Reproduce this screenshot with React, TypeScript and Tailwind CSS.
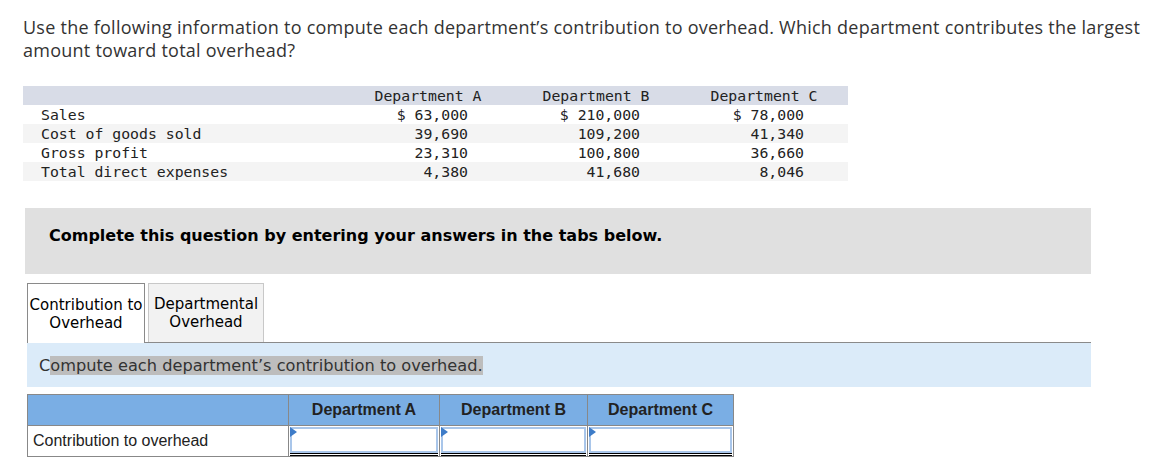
import React from "react";

const rows = [
  { label: "Sales", a: "$ 63,000", b: "$ 210,000", c: "$ 78,000" },
  { label: "Cost of goods sold", a: "39,690", b: "109,200", c: "41,340" },
  { label: "Gross profit", a: "23,310", b: "100,800", c: "36,660" },
  { label: "Total direct expenses", a: "4,380", b: "41,680", c: "8,046" },
];

function InputCell() {
  return (
    <div className="h-[30px] border-l border-[#888] bg-white pt-px px-px">
      <div className="relative h-[26px] border-2 border-[#a9c6ea] bg-white">
        <div className="absolute -left-[2px] -top-[2px] w-0 h-0 border-y-[5px] border-y-transparent border-l-[7px] border-l-[#3e7cc8]" />
      </div>
      <div className="h-[3px] border-y border-black" />
    </div>
  );
}

export default function App() {
  return (
    <div className="w-[1165px] h-[463px] bg-white text-[#333] overflow-hidden">
      <p className="pl-[23px] pr-[10px] pt-[16px] text-[18px] leading-[23px] tracking-[0.25px] font-['Open_Sans',sans-serif] text-[#333]">
        Use the following information to compute each department’s contribution to overhead. Which department contributes the largest amount toward total overhead?
      </p>

      <div className="ml-[23px] mt-[24px] w-[825px] font-['DejaVu_Sans_Mono',monospace] text-[14.8px] leading-[19px] text-[#222]">
        <div className="grid grid-cols-[321px_168px_168px_168px] h-[19px] bg-[#d8dce7]">
          <div />
          <div className="text-center">Department A</div>
          <div className="text-center">Department B</div>
          <div className="text-center">Department C</div>
        </div>
        {rows.map((r, i) => (
          <div
            key={r.label}
            className={`grid grid-cols-[321px_168px_168px_168px] h-[19px] ${i % 2 === 1 ? "bg-[#f4f4f4]" : "bg-white"}`}
          >
            <div className="pl-[18px] whitespace-pre">{r.label}</div>
            <div className="text-right pr-[44px] whitespace-pre">{r.a}</div>
            <div className="text-right pr-[40px] whitespace-pre">{r.b}</div>
            <div className="text-right pr-[44px] whitespace-pre">{r.c}</div>
          </div>
        ))}
      </div>

      <div className="ml-[25px] mt-[27px] w-[1066px] h-[66px] bg-[#e0e0e0] pl-[24px] pt-[15px]">
        <span className="font-['DejaVu_Sans',sans-serif] font-bold text-[16px] leading-[20px] text-black">
          Complete this question by entering your answers in the tabs below.
        </span>
      </div>

      <div className="ml-[27px] mt-[9px] w-[1064px]">
        <div className="flex items-end gap-[3px] font-['DejaVu_Sans',sans-serif] text-[15px] leading-[18px] text-black">
          <div className="relative z-10 -mb-px w-[118px] h-[60px] border border-b-0 border-[#8a8a8a] bg-white flex items-center justify-center text-center">
            Contribution to<br />Overhead
          </div>
          <div className="w-[116px] h-[59px] border border-b-0 border-[#c8c8c8] bg-[#f2f2f2] flex items-center justify-center text-center">
            Departmental<br />Overhead
          </div>
        </div>
        <div className="h-[45px] border-t border-[#8a8a8a] bg-[#dbebf9] pl-[12px] pt-[13px] font-['DejaVu_Sans',sans-serif] text-[16.2px] leading-[19px] text-[#333]">
          <span>C</span>
          <span className="bg-[#bdbdbd]">ompute each department’s contribution to overhead.</span>
        </div>

        <div className="mt-[7px] w-[707px] border border-[#888] font-['Liberation_Sans',sans-serif] text-[16px] text-[#222]">
          <div className="grid grid-cols-[260px_151px_148px_146px] h-[30px] bg-[#7aaee4] font-bold">
            <div />
            <div className="border-l border-[#888] flex items-center justify-center">Department A</div>
            <div className="border-l border-[#888] flex items-center justify-center">Department B</div>
            <div className="border-l border-[#888] flex items-center justify-center">Department C</div>
          </div>
          <div className="grid grid-cols-[260px_151px_148px_146px] border-t border-[#888]">
            <div className="h-[30px] flex items-center pl-[5px] bg-white">Contribution to overhead</div>
            <InputCell />
            <InputCell />
            <InputCell />
          </div>
        </div>
      </div>
    </div>
  );
}
